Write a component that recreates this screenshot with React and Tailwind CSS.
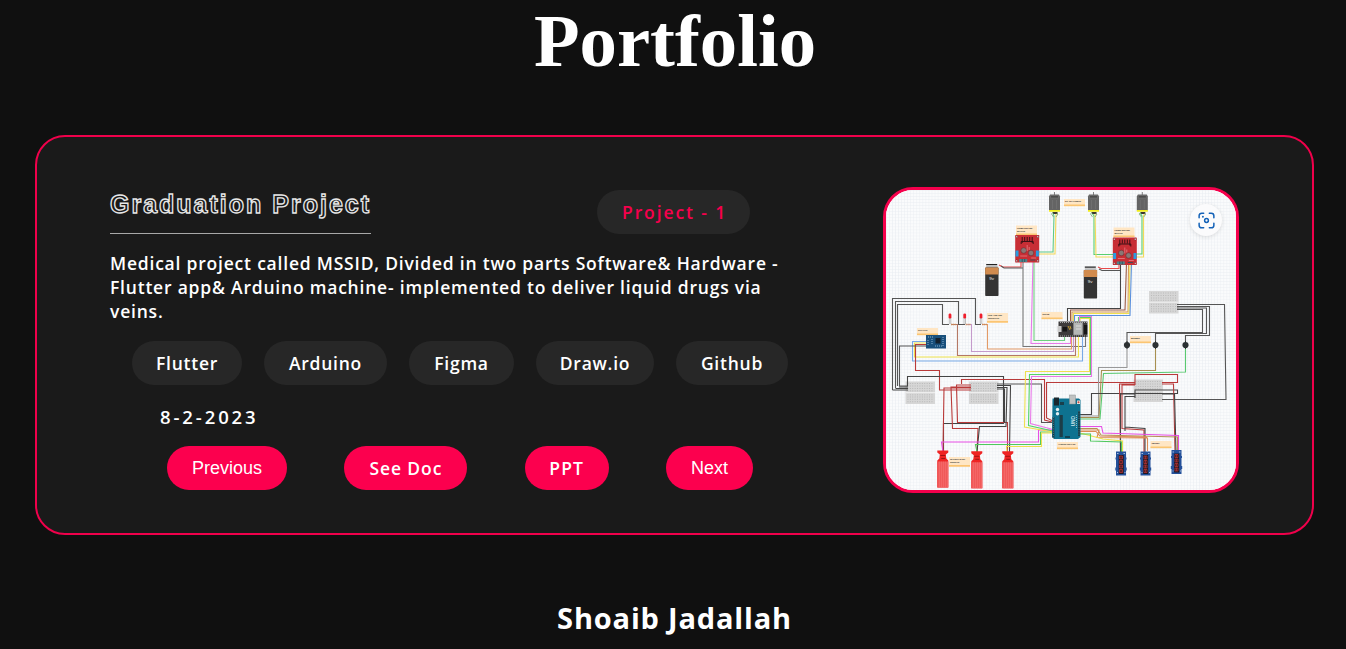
import React from "react";

const tags = [
  { label: "Flutter", cls: "w-[110px]" },
  { label: "Arduino", cls: "w-[123px]" },
  { label: "Figma", cls: "w-[105px]" },
  { label: "Draw.io", cls: "w-[118px]" },
  { label: "Github", cls: "w-[112px]" },
];

const wires = [
  // motor leads
  ["#5fc98a", "M1053 213L1054 216L1053 252H1037"],
  ["#f5d95a", "M1056 213L1055 254H1037"],
  ["#58cf70", "M1092 213L1094 216V254.5H1113"],
  ["#f5d95a", "M1095 213L1096 257H1113"],
  ["#58cf70", "M1140 213L1142 216V254H1136"],
  ["#f5d95a", "M1145 213L1143.5 216V257H1136"],
  // batteries
  ["#e84a4a", "M999 265L1003 267H1021V262"],
  ["#555", "M1001 266L1004 268H1023"],
  ["#e84a4a", "M1098 267L1101 268.5H1119V263"],
  ["#555", "M1099 269L1102 270.5H1121"],
  // left driver down
  ["#777", "M1023 261V346.5H1085.5V335"],
  ["#e879e8", "M1033 261L1031 343.5H1070.5V336"],
  ["#6fcf7f", "M1034 261V340.5H1064.5V336"],
  // right driver to controller
  ["#444", "M1120.5 263V308.5H1067.5V321"],
  ["#9a5b45", "M1126.5 263L1125 310H1070.5V321"],
  ["#d99a52", "M1128.5 263L1128 312H1072V321"],
  ["#eee04f", "M1130 263L1129 313.5H1073.5V321"],
  ["#5b90dc", "M1131.5 263L1130 315.5H1074.5V321"],
  // indicator lamps
  ["#555", "M892.5 390V298.5H975.5V324.5H981"],
  ["#555", "M895.5 388V301.5H958.5V324.5H965"],
  ["#555", "M897.5 386V304.5H942.5V324.5H949"],
  ["#b57864", "M951 324.5H957.5V355.5H1075.5V336"],
  ["#c49acb", "M967 324.5H971.5V351.5H1073.5V336"],
  ["#e39a66", "M982 324.5H987.5V349H1071.5V336"],
  ["#f0e44c", "M927 343H914.5V357H1078.5V336"],
  ["#79a9e6", "M927 341.5H912.5V361H1082.5V336"],
  ["#b93a3a", "M927 344.5H915.5V370.5H939.5V390H971"],
  ["#555", "M927 346H899.5V386H908"],
  ["#444", "M892.5 390H908M895.5 388.5H908M899 387H908"],
  // boards below
  ["#444", "M907.5 386V376.5H1003.5V423.5H943.5V452"],
  ["#b93a3a", "M961.5 384V379.5H1044.5V420L1052 422"],
  ["#555", "M997 384H1041.5V422.5H1052"],
  ["#b93a3a", "M971 388H944L943 451M971 387H951L952.5 428.5H978L977 452M971 385H956.5L957.5 422.5H1007.5V452"],
  ["#444", "M997 385.5H1010.5L1009.5 452M997 387.5H1007L1006 426.5H979.5L977 452M997 389H1004.5V423"],
  ["#b93a3a", "M1053 421L1046.5 418V382.5H1135"],
  ["#e74fe6", "M943 452L941.5 442H1038.5V430H1053"],
  ["#4ec85d", "M977 452L975.5 444.5H1040.5V432H1053"],
  ["#eee04f", "M1007 452L1006.5 446.5H1041.5V433H1053"],
  // controller to main board
  ["#eee04f", "M1080 321V318.5H1089.5V371.5H1025.5L1024.5 427L1053 432"],
  ["#54d466", "M1078.5 321V317.5H1090.5V374.5H1029.5L1028.5 425.5L1053 431"],
  ["#e879e8", "M1079.5 321V316.5H1091.5V376.5H1031.5L1030.5 423.5L1053 429.5"],
  // push buttons
  ["#555", "M1127 344V332.5H1202.5V309.5H1177M1155.5 344V333.5H1206.5V308H1177M1185.5 344V335.5H1209.5V306.5H1177"],
  ["#555", "M1177 304.5H1224.5L1226 399.5H1162"],
  ["#999", "M1127 346V367.5H1098.5V416H1080"],
  ["#a78f50", "M1155.5 346V370.5H1101.5L1099 417.5H1080"],
  ["#5ac970", "M1185.5 346V372L1103.5 373.5L1100 419H1080"],
  ["#444", "M1080 414.5H1091.5V393.5H1177.5V390H1135V398"],
  ["#b93a3a", "M1135 385V374.5H1177.5V382.5H1162M1135 384H1119.5L1120.5 451M1135 385H1122V428.5L1144 430V452M1162 384H1173.5L1175 451"],
  ["#444", "M1135 394H1120.5V452M1135 396.5H1125V431M1125 427L1145 428.5V452M1162 394H1174.5L1176 451"],
  ["#e74fe6", "M1080 426.5H1101.5L1103 433L1178.5 435.5V451"],
  ["#b39255", "M1080 428.5H1097L1101 435L1177.5 437V451"],
  ["#dc8b54", "M1080 430H1099L1097 437.5L1147.5 438V451M1080 431.5H1096L1100 436L1147 437"],
  ["#eee04f", "M1080 433L1103 439L1122.5 441V453"],
  ["#4ec85d", "M1080 434H1090.5V441L1121.5 442V453"],
];

const notes = [
  [1016, 225.5, 21, "L298N DRIVER", "MOTOR"],
  [1113.5, 227.5, 21, "L298N DRIVER", "MOTOR"],
  [1064, 199, 21, "DC 12V PUMPS", ""],
  [987, 313, 21, "LED AND 220", "RESISTOR"],
  [1041.5, 312, 21, "ESP32", ""],
  [917, 328, 21, "RTC CLK", ""],
  [1130, 336, 21, "BUZZER", ""],
  [949, 457, 21, "WATER LEVEL", "SENSOR"],
  [1057, 442, 21, "Arduino UNO R3", ""],
  [1150.5, 441, 21, "TM1637", ""],
];

function Note({ x, y, w, a, b }) {
  const h = b ? 9.5 : 7;
  return (
    <g>
      <rect x={x} y={y} width={w} height={h} fill="#ffe6c4" />
      <rect x={x} y={y + h - 1.5} width={w} height="1.7" fill="#fbc572" />
      <text x={x + 1} y={y + 3.2} fontSize="2.2" fontWeight="bold" fill="#333">{a}</text>
      {b && <text x={x + 1} y={y + 6.2} fontSize="2.2" fontWeight="bold" fill="#333">{b}</text>}
    </g>
  );
}

function Motor({ x }) {
  return (
    <g transform={`translate(${x} 192)`}>
      <path d="M0 0V3" stroke="#666" strokeWidth="0.8" />
      <path d="M-4.5 2.5H4.5L5.5 4.5V18.5H-5.5V4.5Z" fill="#646464" />
      <path d="M-4 3.5H4V6H-4ZM-2 8V17M2 8V17" fill="#4c4c4c" stroke="#777" strokeWidth="0.6" />
      <path d="M-5.5 18H5.5V19.8H-5.5Z" fill="#f2ee1d" />
      <path d="M-2 20H3V22H-1Z" fill="#3b352d" />
      <path d="M-1.5 20L-3 22L-1 25M2 21.5L3.5 22L1.5 25" fill="none" stroke="#6b9b62" strokeWidth="0.7" />
    </g>
  );
}

function Driver({ x, y }) {
  return (
    <g transform={`translate(${x} ${y})`}>
      <rect width="24" height="27.5" rx="0.6" fill="#c82e35" />
      <path d="M6 9V6.5H18V9M7 2V8M9.5 2V6M12 2V6M14.5 2V6M17 2V8" fill="none" stroke="#3c1115" strokeWidth="1" />
      <circle cx="8.5" cy="15.5" r="2.8" fill="#8a7776" stroke="#712b30" strokeWidth="0.6" />
      <circle cx="15.8" cy="18" r="2.8" fill="#8a7776" stroke="#712b30" strokeWidth="0.6" />
      <path d="M12 10V16M14 12V15M5 21H12M16 23H21" stroke="#ed8b90" strokeWidth="0.7" />
      <rect x="0.3" y="15.5" width="3" height="6" fill="#2b9be0" />
      <rect x="20.7" y="15.5" width="3" height="6" fill="#2b9be0" />
      <path d="M4 24H12V27H4Z" fill="#4f858d" />
      <path d="M7 24V27M9.5 24V27M15 25H20" stroke="#32515a" strokeWidth="0.9" />
      {[1.5, 22.5].map((a) => [1.7, 25.8].map((b) => <circle key={`${a}-${b}`} cx={a} cy={b} r="0.9" fill="#f6dede" stroke="#542227" strokeWidth="0.4" />))}
    </g>
  );
}

function Battery({ x, y }) {
  return (
    <g transform={`translate(${x} ${y})`}>
      <path d="M1 0H12V1.2H1Z" fill="#222" />
      <path d="M1 1.7H12.5V4H1Z" fill="#b9b9b9" />
      <rect y="3.5" width="13.3" height="28.5" rx="0.7" fill="#333" />
      <rect y="3.5" width="13.3" height="7" rx="0.5" fill="#d18b4e" />
      <text x="4" y="16" fontSize="4.4" fill="#eee">9v</text>
    </g>
  );
}

function Breadboard({ x, y }) {
  return (
    <g transform={`translate(${x} ${y})`}>
      <rect width="29.5" height="22.5" fill="#d6d6d6" />
      <path d="M0 11.2H29.5" stroke="#f3f3f3" strokeWidth="1" />
      {[2, 4.5, 7, 9.3, 13.3, 15.5, 17.8, 20.2].map((r) => (
        <path key={r} d={`M2 ${r}H28`} stroke="#b3b3b3" strokeWidth="0.9" strokeDasharray="0.9 1.5" />
      ))}
    </g>
  );
}

function WaterSensor({ x, y }) {
  return (
    <g transform={`translate(${x} ${y})`}>
      <path d="M0 0H11V2L8.5 4L9 8L11 10V37H0V10L2 8L2.5 4L0 2Z" fill="#ef2424" />
      <rect y="11" width="11" height="26" fill="#ef5555" />
      <path d="M2 11V37M4 11V37M6 11V37M8 11V37M10 11V37" stroke="#f87a7a" strokeWidth="0.6" />
      <path d="M3 5H8M4 8H8" stroke="#a01414" strokeWidth="1" />
    </g>
  );
}

function SegmentDisplay({ x, y }) {
  return (
    <g transform={`translate(${x} ${y})`}>
      <path d="M0.5 0H10.5V6H11V8H10.5V16H11.2V19H10.5V24H0.5V19H-0.2V16H0.5V8H0V6H0.5Z" fill="#24509a" />
      <rect x="3.2" y="3.5" width="5" height="19" fill="#1c1620" />
      {[4.5, 9, 13.5, 18].map((r) => (
        <path key={r} d={`M4 ${r}H7V${r + 3}H4ZM5.5 ${r}V${r + 3}`} fill="none" stroke="#c33434" strokeWidth="0.7" />
      ))}
      <path d="M1.5 2H3M8 2H9.5M1.5 21H2.5M9 21H10" stroke="#c7d9f3" strokeWidth="0.8" />
    </g>
  );
}

function Circuit() {
  return (
    <svg viewBox="886 190 350 300" className="block h-full w-full" fontFamily="Liberation Sans, sans-serif">
      <defs>
        <pattern id="grid" x="886" y="190" width="3.04" height="3.04" patternUnits="userSpaceOnUse">
          <path d="M0 0H3.04M0 0V3.04" stroke="#e9edf1" strokeWidth="0.9" />
        </pattern>
      </defs>
      <rect x="886" y="190" width="350" height="300" fill="#fafbfc" />
      <rect x="886" y="190" width="350" height="300" fill="url(#grid)" />

      <Breadboard x={1149} y={291} />
      <Breadboard x={905.5} y={381.5} />
      <Breadboard x={969} y={381.5} />
      <Breadboard x={1133.5} y={379.5} />

      <g fill="none" strokeWidth="1.1">
        {wires.map(([c, d], i) => <path key={i} d={d} stroke={c} />)}
      </g>

      {notes.map(([x, y, w, a, b]) => <Note key={`${x}${y}`} x={x} y={y} w={w} a={a} b={b} />)}

      <Motor x={1054.5} />
      <Motor x={1093.5} />
      <Motor x={1142.3} />
      <Driver x={1015.2} y={235} />
      <Driver x={1112.8} y={237.5} />
      <Battery x={985.2} y={264} />
      <Battery x={1083.8} y={266.5} />

      {[950, 964.7, 981].map((x) => (
        <g key={x}>
          <path d={`M${x - 0.7} 318V324M${x + 0.8} 318V324`} stroke="#999" strokeWidth="0.6" />
          <rect x={x - 1.4} y="313.5" width="2.8" height="5" rx="1.3" fill="#ef1e2c" />
          <path d={`M${x + 1} 324.5H${x + 6}`} stroke="#c98a5b" strokeWidth="1.3" strokeDasharray="1.2 .6" />
        </g>
      ))}

      {/* clock module */}
      <rect x="926" y="335" width="20" height="13.5" fill="#19507c" />
      <rect x="935.5" y="338" width="5" height="5.5" fill="#14212e" />
      <path d="M928 337H933M928 340V346M932 339V345M943 337V346M935 346H942" stroke="#8cb1d0" strokeWidth="1" strokeDasharray="1 1" />

      {/* wireless controller */}
      <rect x="1058.5" y="321.5" width="29" height="15.5" fill="#3d3b3b" />
      <rect x="1057.5" y="326" width="4" height="6" fill="#c9c9c9" />
      <rect x="1073.3" y="322.5" width="9.5" height="12.5" fill="#b5b7b6" stroke="#777" strokeWidth="0.5" />
      <path d="M1076 326H1081M1076 329H1081" stroke="#e7e7e7" strokeWidth="0.8" />
      <path d="M1060 322.5H1087M1060 336H1087" stroke="#aaa" strokeWidth="1" strokeDasharray="1 1" />
      <rect x="1062.5" y="327" width="4.5" height="4.5" fill="#161616" />
      <path d="M1068 326L1070 330M1070 326L1071 329" stroke="#d6a72f" strokeWidth="0.9" />
      <rect x="1084" y="325" width="3.2" height="9" fill="#171717" />

      {[1127, 1155.5, 1185.5].map((x) => (
        <g key={x}>
          <circle cx={x} cy="345" r="3.1" fill="#2c3133" />
          <path d={`M${x} 341V349`} stroke="#2c3133" strokeWidth="1" />
        </g>
      ))}

      {/* main board */}
      <path d="M1052.5 398.5H1079L1080.5 400V437L1078 439H1054L1052 437Z" fill="#0e7290" />
      <rect x="1054" y="397.5" width="5" height="8" fill="#17262d" />
      <rect x="1069.5" y="395" width="6" height="9" fill="#bfc2c2" stroke="#8c9293" strokeWidth="0.5" />
      <rect x="1077" y="400.5" width="3" height="3.5" fill="#ece6df" />
      <circle cx="1078.5" cy="402.2" r="1" fill="#ca4840" />
      <circle cx="1057.5" cy="409.5" r="1.7" fill="#e2edf0" />
      <circle cx="1057.5" cy="413.7" r="1.7" fill="#e2edf0" />
      <rect x="1059.5" y="415" width="3.3" height="22" fill="#1c3d48" />
      <path d="M1053.5 417V438M1079 411V436M1065 437H1070" stroke="#12323d" strokeWidth="1.7" />
      <path d="M1053.5 417V438M1079 411V436" stroke="#7eafbc" strokeWidth="0.6" strokeDasharray=".8 1" />
      <path d="M1060 402H1064V405H1060Z" fill="#193f4c" />
      <text transform="translate(1075 426) rotate(-90)" fontSize="4.5" fontWeight="bold" fill="#cfe5eb">UNO</text>
      <path d="M1076.5 415V429" stroke="#8dbdca" strokeWidth="1" strokeDasharray="1 1" />

      <WaterSensor x={937.3} y={450.5} />
      <WaterSensor x={971.3} y={451.3} />
      <WaterSensor x={1002.3} y={451.3} />
      <SegmentDisplay x={1115.5} y={451.5} />
      <SegmentDisplay x={1140} y={451.5} />
      <SegmentDisplay x={1171} y={450} />
    </svg>
  );
}

function ScanButton() {
  return (
    <button aria-label="Visual search" className="absolute top-[14px] right-[14px] flex h-8 w-8 items-center justify-center rounded-full bg-[#fbfbfc] shadow-[0_1px_4px_rgba(0,0,0,0.12)]">
      <svg width="17" height="17" viewBox="0 0 18 18" fill="none" stroke="#1563b8" strokeWidth="1.6" strokeLinecap="round">
        <path d="M1.2 6V4A2.8 2.8 0 0 1 4 1.2H6M12 1.2H14A2.8 2.8 0 0 1 16.8 4V6M16.8 12V14A2.8 2.8 0 0 1 14 16.8H12M6 16.8H4A2.8 2.8 0 0 1 1.2 14V12" />
        <circle cx="9" cy="9" r="2" />
        <circle cx="5.2" cy="5" r="1" fill="#1563b8" stroke="none" />
      </svg>
    </button>
  );
}

const button = "h-11 rounded-[25px] bg-[#fc004e] text-center whitespace-nowrap text-white";
const semibold = "font-['Open_Sans',sans-serif] font-semibold";

export default function App() {
  return (
    <main className="flex h-[649px] w-full flex-col overflow-hidden bg-[#101010] text-white">
      <h1 className="h-[135px] pt-px pl-1 text-center font-['Liberation_Serif',serif] text-[74.7px] leading-[80px] font-bold">Portfolio</h1>

      <section className="ml-[35px] flex h-[400px] w-[1279px] shrink-0 rounded-[30px] border-2 border-[#f0004b] bg-[#1a1a1a]">
        <div className="ml-[73px] w-[700px]">
          <div className="mt-[53px] flex h-11 w-[640px] justify-between">
            <h2 className="h-11 w-[261px] border-b border-[#a8a8a8] font-['Liberation_Sans',sans-serif] text-[25px] leading-[29px] font-bold tracking-[2px] whitespace-nowrap text-transparent [-webkit-text-stroke:1.3px_#e8e8e8]">Graduation Project</h2>
            <span className={`${semibold} h-11 w-[153px] rounded-[25px] bg-[#272727] pl-[25px] text-[17.5px] leading-[45px] tracking-[1.9px] whitespace-nowrap text-[#f5004c]`}>Project - 1</span>
          </div>
          <p className={`${semibold} mt-[17px] h-[72px] text-[17.5px] leading-6 tracking-[0.79px] whitespace-nowrap`}>
            Medical project called MSSID, Divided in two parts Software&amp; Hardware -<br />
            Flutter app&amp; Arduino machine- implemented to deliver liquid drugs via<br />
            veins.
          </p>
          <div className="mt-[18px] ml-[22px] flex gap-[22px]">
            {tags.map((t) => (
              <span key={t.label} className={`${semibold} ${t.cls} h-11 rounded-[25px] bg-[#272727] text-center text-[17.5px] leading-[45px] tracking-[0.75px] whitespace-nowrap`}>{t.label}</span>
            ))}
          </div>
          <div className={`${semibold} mt-5 ml-[50px] h-6 text-[18.5px] leading-6 tracking-[2.9px]`}>8-2-2023</div>
          <div className="mt-[17px] ml-[57px] flex w-[586px] justify-between">
            <button className={`${button} w-[120px] font-['Liberation_Sans',sans-serif] text-[18px]`}>Previous</button>
            <button className={`${button} ${semibold} w-[123px] text-[17.5px] tracking-[0.9px]`}>See Doc</button>
            <button className={`${button} ${semibold} w-[84px] text-[17.5px] tracking-[1.1px]`}>PPT</button>
            <button className={`${button} w-[87px] font-['Liberation_Sans',sans-serif] text-[18px]`}>Next</button>
          </div>
        </div>
        <div className="relative mt-[50px] ml-[73px] h-[306px] w-[356px] overflow-hidden rounded-[30px] border-3 border-[#f5004c] bg-white">
          <Circuit />
          <ScanButton />
        </div>
      </section>

      <h3 className="mt-[63px] pl-[3px] text-center font-['Open_Sans',sans-serif] text-[29px] leading-[40px] font-bold tracking-[0.82px] whitespace-nowrap">Shoaib Jadallah</h3>
    </main>
  );
}
